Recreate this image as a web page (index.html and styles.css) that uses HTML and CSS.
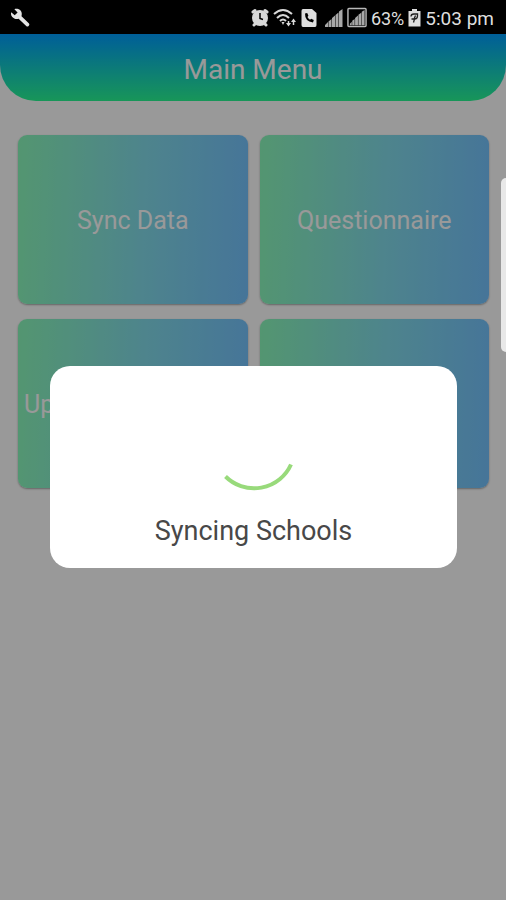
FILE: index.html
```html
<!DOCTYPE html>
<html lang="en">
<head>
<meta charset="utf-8">
<meta name="viewport" content="width=device-width, initial-scale=1">
<title>Main Menu</title>
<link rel="stylesheet" href="styles.css">
</head>
<body>
<div class="status-bar">
  <svg class="wrench" width="20" height="20" viewBox="0 0 20 20" aria-hidden="true">
    <path d="M1.200 4.200 L4.700 7.200 L7.600 4.500 L4.400 1.200 C7.500 0 11.800 2 11.800 6 L11.500 8.200 L19 15.500 Q20 16.800 18.600 18 Q17.400 19.200 16.200 18 L8.600 10.700 C4.600 12 0 8.600 1.200 4.200 Z" fill="#e4e4e4"/>
  </svg>
  <div class="indicators">
    <svg width="18" height="20" viewBox="0 0 18 20" aria-hidden="true">
      <g stroke="#d8d8d8" stroke-width="3" stroke-linecap="round"><path d="M2 4 L4 2.500 M16 4 L14 2.500 M3 17 L5 15 M15 17 L13 15"/></g>
      <circle cx="9" cy="10" r="8" fill="#d8d8d8"/>
      <path d="M9 5 V10.500 L12 11.500" fill="none" stroke="#000" stroke-width="1.500"/>
    </svg>
    <svg width="24" height="20" viewBox="0 0 24 20" aria-hidden="true">
      <g fill="none" stroke="#d8d8d8" stroke-width="2">
        <path d="M1 6 Q10 -2 19 6"/><path d="M4 10 Q10 4 16 10"/><path d="M7 13 Q10 10 13 13"/>
      </g>
      <path d="M8.500 14 H11.500 L10 17 Z" fill="#d8d8d8"/>
      <path d="M15.500 13 V17 M20.500 17 V13" stroke="#d8d8d8" stroke-width="1.500"/>
      <path d="M13 15 H18 L15.500 18.500 Z M18 14 H23 L20.500 10.500 Z" fill="#d8d8d8"/>
    </svg>
    <svg class="call" width="16" height="20" viewBox="0 0 16 20" aria-hidden="true">
      <path d="M2 1 H11 L15.500 5 V17 Q15.500 19 14 19 H2 Q0.500 19 0.500 17 V3 Q0.500 1 2 1 Z" fill="#dedede"/>
      <path d="M4 5.500 Q3.800 13.500 12 14.500 L12.800 12 L10.200 10.700 L9 11.700 Q7.200 10.800 6.500 9 L7.400 7.800 L6.200 5 Z" fill="#000"/>
    </svg>
    <svg width="18" height="20" viewBox="0 0 18 20" aria-hidden="true">
      <path d="M0 19 V17 L3 14 V19 Z M3.500 19 V13.500 L6.500 11 V19 Z M7 19 V10 L10 7.500 V19 Z M10.500 19 V7 L13.500 4.500 V19 Z M14 19 V3.500 L17.500 1 V19 Z" fill="#a8a8a8"/>
    </svg>
    <svg width="20" height="22" viewBox="0 0 21 22" aria-hidden="true">
      <rect x="1" y="1" width="19" height="19" rx="1" fill="none" stroke="#b8b8b8" stroke-width="1.500"/>
      <path d="M3 18.500 V17 L5 15 V18.500 Z M5.500 18.500 V14 L8 12 V18.500 Z M8.500 18.500 V11 L11.500 8.500 V18.500 Z M12 18.500 V7.500 L15 5.500 V18.500 Z M15.500 18.500 V4.500 L18.500 2.500 V18.500 Z" fill="#a8a8a8"/>
    </svg>
    <span class="percent">63%</span>
    <svg class="battery" width="13" height="20" viewBox="0 0 13 20" aria-hidden="true">
      <path d="M4 1 H9 V3 H12.500 V18.500 H0.500 V3 H4 Z" fill="#dedede"/>
      <path d="M3 8.500 Q3 6 6 6 H9.500 V8 Q9.500 11 6.500 11 L5.500 14.500 M3.500 11 H6 L7.500 7.500" fill="none" stroke="#222" stroke-width="1.300"/>
    </svg>
    <time class="time">5:03 pm</time>
  </div>
</div>
<div class="screen">
  <header class="header"><h1>Main Menu</h1></header>
  <main class="menu">
    <button class="card" type="button">Sync Data</button>
    <button class="card" type="button">Questionnaire</button>
    <button class="card card-start" type="button">Up</button>
    <button class="card" type="button"></button>
  </main>
  <div class="scrim">
    <div class="dialog" role="dialog" aria-modal="true" aria-labelledby="sync-status">
      <svg class="spinner" width="88" height="88" viewBox="0 0 88 88" aria-hidden="true">
        <path d="M15.500 72.500 A40.500 40.500 0 0 0 81 60.500" fill="none" stroke="#98da7b" stroke-width="4"/>
      </svg>
      <p id="sync-status">Syncing Schools</p>
    </div>
  </div>
  <div class="edge-handle"></div>
</div>
</body>
</html>
```
FILE: styles.css
```css
* {
  box-sizing: border-box;
}

body {
  margin: 0;
  min-height: 100vh;
  display: flex;
  flex-direction: column;
  background: #fff;
  font-family: Roboto, "Liberation Sans", sans-serif;
}

.status-bar {
  display: flex;
  align-items: center;
  justify-content: space-between;
  height: 34px;
  padding: 2px 12px 0 10px;
  background: #000;
  color: #dedede;
  font-size: 19px;
}

.indicators {
  display: flex;
  align-items: center;
  gap: 4px;
}

.call {
  margin-right: 4px;
}

.percent {
  font-size: 18px;
}

.screen {
  position: relative;
  flex: 1;
}

.header {
  display: flex;
  align-items: center;
  justify-content: center;
  height: 67px;
  padding-top: 4px;
  border-radius: 0 0 36px 36px;
  background: linear-gradient(#009eff, #28fa94);
  color: #fff;
}

h1 {
  margin: 0;
  font-size: 28px;
  font-weight: 400;
}

.menu {
  display: grid;
  grid-template-columns: 1fr 1fr;
  grid-auto-rows: 169px;
  gap: 15px 12px;
  padding: 34px 17px 34px 18px;
}

.card {
  padding: 2px 6px 0;
  border: 0;
  border-radius: 9px;
  background: linear-gradient(92deg, #8bfabc, #82dceb 55%, #75c3ff);
  box-shadow: 0 1px 2px rgba(0, 0, 0, 0.35);
  color: #fff;
  font: 400 25px Roboto, "Liberation Sans", sans-serif;
}

.card-start {
  text-align: left;
}

.scrim {
  position: absolute;
  inset: 0;
  display: flex;
  align-items: center;
  justify-content: center;
  padding: 0 49px 0 50px;
  background: rgba(0, 0, 0, 0.4);
}

.dialog {
  display: flex;
  flex-direction: column;
  align-items: center;
  gap: 22px;
  width: 100%;
  padding: 38px 20px 20px;
  border-radius: 20px;
  background: #fff;
}

.dialog p {
  margin: 0;
  color: #484848;
  font-size: 27px;
  line-height: 34px;
}

.edge-handle {
  position: absolute;
  top: 144px;
  right: 0;
  width: 5px;
  height: 174px;
  border-radius: 5px 0 0 5px;
  background: #e8e8e8;
}
```
